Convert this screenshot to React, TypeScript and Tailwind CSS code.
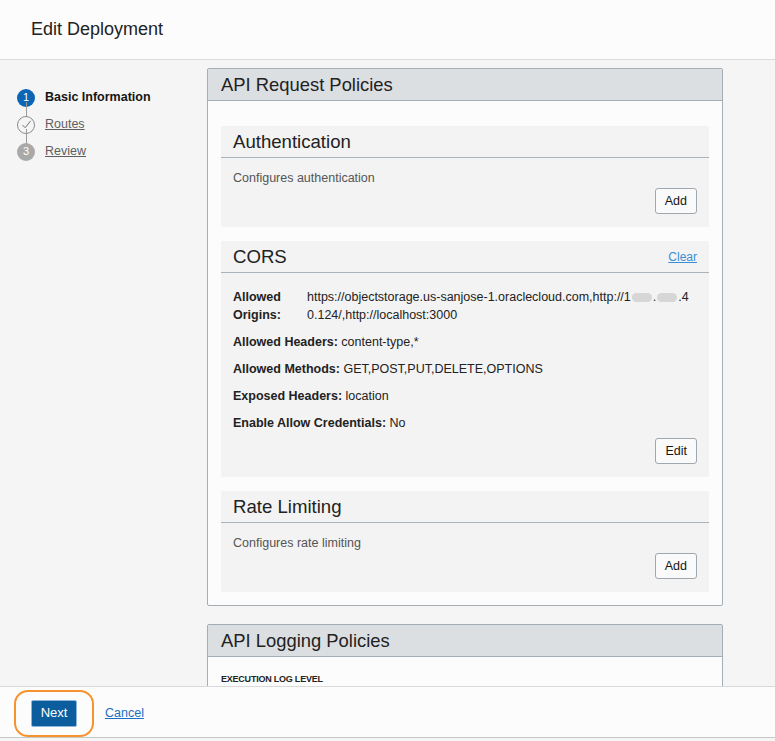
import React from "react";

const font = { fontFamily: '"Liberation Sans", Arial, sans-serif' };

function Step({ n, label, state, last }: { n: string; label: string; state: "active" | "done" | "todo"; last?: boolean }) {
  return (
    <div className="relative flex items-center h-[27px]">
      {!last && <div className="absolute left-[8.5px] top-[18px] w-px h-[18px] bg-[#9a9a9a]" />}
      {state === "active" && (
        <div className="w-[18px] h-[18px] rounded-full bg-[#0b66b5] text-white text-[11px] flex items-center justify-center">{n}</div>
      )}
      {state === "done" && (
        <div className="w-[18px] h-[18px] rounded-full border border-[#8a8a8a] bg-[#f5f5f5] flex items-center justify-center">
          <svg width="11" height="11" viewBox="0 0 12 12" fill="none">
            <path d="M1.5 6.5 L4.5 9.5 L10.5 2" stroke="#666" strokeWidth="1" />
          </svg>
        </div>
      )}
      {state === "todo" && (
        <div className="w-[18px] h-[18px] rounded-full bg-[#a9a9a9] text-white text-[11px] flex items-center justify-center">{n}</div>
      )}
      <span
        className={
          state === "active"
            ? "ml-[10px] text-[12.5px] font-bold text-[#161513]"
            : "ml-[10px] text-[12.5px] text-[#5f5f5f] underline"
        }
      >
        {label}
      </span>
    </div>
  );
}

function Card({ title, action, children }: { title: string; action?: React.ReactNode; children: React.ReactNode }) {
  return (
    <div className="bg-[#f3f3f3] rounded-[2px]">
      <div className="h-[32px] px-[12px] flex items-center justify-between border-b border-[#a9b3bd]">
        <span className="text-[18.6px] text-[#222]">{title}</span>
        {action}
      </div>
      <div className="px-[12px] pt-[13px] pb-[13px]">{children}</div>
    </div>
  );
}

function SmallButton({ label }: { label: string }) {
  return (
    <div className="flex justify-end">
      <button className="h-[26px] px-[9px] border border-[#a0a7ae] rounded-[3px] bg-[#fafafa] text-[12.5px] text-[#161513]">
        {label}
      </button>
    </div>
  );
}

function Blur() {
  return <span className="inline-block w-[20px] h-[9px] rounded-full bg-[#d6d6d6] align-middle mx-[1px]" />;
}

export default function App() {
  return (
    <div className="h-[741px] w-[775px] flex flex-col bg-[#f5f5f5] text-[#161513] overflow-hidden" style={font}>
      <header className="h-[60px] shrink-0 bg-[#fcfcfc] border-b border-[#dcdcdc] flex items-center px-[31px]">
        <h1 className="text-[18px] text-[#222]">Edit Deployment</h1>
      </header>

      <div className="flex-1 overflow-hidden flex">
        <nav className="w-[207px] shrink-0 pl-[17px] pt-[24px]">
          <Step n="1" label="Basic Information" state="active" />
          <Step n="2" label="Routes" state="done" />
          <Step n="3" label="Review" state="todo" last />
        </nav>

        <main className="w-[516px] pt-[8px]">
          <section className="border border-[#a5adb5] rounded-[2px] bg-[#fcfcfc]">
            <div className="h-[32px] bg-[#dcdfe2] border-b border-[#a5adb5] flex items-center px-[13px]">
              <h2 className="text-[18.4px] text-[#222]">API Request Policies</h2>
            </div>
            <div className="px-[13px] pt-[25px] pb-[13px] flex flex-col gap-[14px]">
              <Card title="Authentication">
                <p className="text-[12.5px] leading-[15px] text-[#555]">Configures authentication</p>
                <div className="mt-[2px]">
                  <SmallButton label="Add" />
                </div>
              </Card>

              <Card
                title="CORS"
                action={<a className="text-[12px] text-[#3a8fd6] underline">Clear</a>}
              >
                <div className="text-[12.5px] leading-[18px] text-[#222] pt-[2px]">
                  <div className="flex">
                    <span className="w-[74px] shrink-0 font-bold">Allowed Origins:</span>
                    <span>
                      https://objectstorage.us-sanjose-1.oraclecloud.com,http://1<Blur />.<Blur />.4
                      <br />
                      0.124/,http://localhost:3000
                    </span>
                  </div>
                  <div className="mt-[9px]"><span className="font-bold">Allowed Headers:</span> content-type,*</div>
                  <div className="mt-[9px]"><span className="font-bold">Allowed Methods:</span> GET,POST,PUT,DELETE,OPTIONS</div>
                  <div className="mt-[9px]"><span className="font-bold">Exposed Headers:</span> location</div>
                  <div className="mt-[9px]"><span className="font-bold">Enable Allow Credentials:</span> No</div>
                </div>
                <div className="mt-[6px]">
                  <SmallButton label="Edit" />
                </div>
              </Card>

              <Card title="Rate Limiting">
                <p className="text-[12.5px] leading-[15px] text-[#555]">Configures rate limiting</p>
                <div className="mt-[2px]">
                  <SmallButton label="Add" />
                </div>
              </Card>
            </div>
          </section>

          <section className="mt-[18px] border border-[#a5adb5] rounded-[2px] bg-[#fcfcfc]">
            <div className="h-[32px] bg-[#dcdfe2] border-b border-[#a5adb5] flex items-center px-[13px]">
              <h2 className="text-[18.4px] text-[#222]">API Logging Policies</h2>
            </div>
            <div className="px-[13px] pt-[13px] pb-[20px] leading-[13px]">
              <span className="text-[9px] font-bold text-[#222] tracking-tight">EXECUTION LOG LEVEL</span>
            </div>
          </section>
        </main>
      </div>

      <footer className="h-[52px] shrink-0 bg-[#fcfcfc] border-t border-[#d9d9d9] border-b border-b-[#c8c8c8] flex items-center pl-[14px] mb-[3px]">
        <div className="border-2 border-[#f7922e] rounded-[14px] px-[15px] py-[8px] mt-[2px]">
          <button className="h-[27px] w-[46px] bg-[#0b5d9e] text-white text-[13px] rounded-[2px] border border-[#8cb6de]">
            Next
          </button>
        </div>
        <a className="ml-[11px] text-[12.5px] text-[#1a6fc2] underline mt-[2px]">Cancel</a>
      </footer>
    </div>
  );
}
